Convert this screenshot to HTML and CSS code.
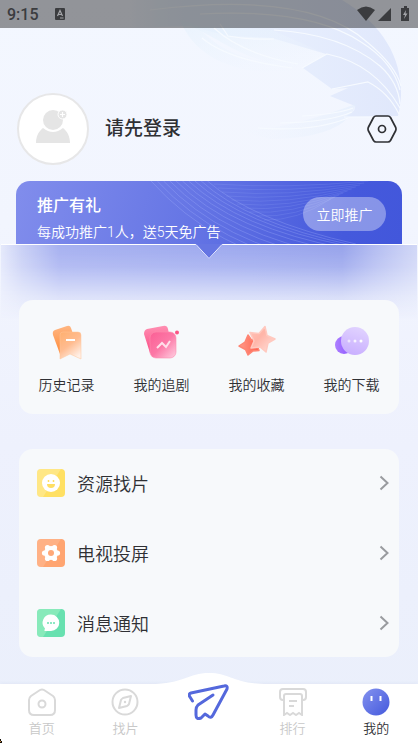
FILE: index.html
```
<!DOCTYPE html>
<html lang="zh-CN">
<head>
<meta charset="utf-8">
<meta name="viewport" content="width=device-width, initial-scale=1">
<title>我的</title>
<link rel="stylesheet" href="styles.css">
</head>
<body>
<div class="app">
  <svg class="swirl" viewBox="0 0 288 180" fill="none" aria-hidden="true">
    <defs>
      <linearGradient id="sw" x1="0" y1="0" x2="1" y2="0">
        <stop offset="0" stop-color="#e2edfc" stop-opacity="0"/><stop offset=".2" stop-color="#e6f0fd"/><stop offset=".6" stop-color="#e4ecfd"/><stop offset="1" stop-color="#dde5fb"/>
      </linearGradient>
      <linearGradient id="sw2" x1="0" y1="0" x2="1" y2="0">
        <stop offset="0" stop-color="#eef5fe" stop-opacity="0"/><stop offset="1" stop-color="#e2edfc"/>
      </linearGradient>
      <linearGradient id="sw3" x1="0" y1="0" x2="1" y2="1">
        <stop offset="0" stop-color="#e6f2fd"/><stop offset="1" stop-color="#eff5fe" stop-opacity="0"/>
      </linearGradient>
    </defs>
    <path d="M0 0H212C255 26 272 60 271 96Q270 108 268 116L214 117Q226 112 225 106L200 96 218 88 202 89 173 68 196 54 142 38 98 36 60 26 0 28Z" fill="url(#sw)" opacity=".85"/>
    <path d="M60 26C86 36 110 60 164 68L196 54 142 30Z" fill="url(#sw3)" opacity=".8"/>
    <path d="M50 20C66 60 110 76 164 72L140 62Q90 56 66 24Z" fill="url(#sw3)" opacity=".7"/>
    <path d="M106 130Q150 132 226 104Q216 138 140 139Z" fill="url(#sw2)" opacity=".6"/>
    <g stroke="#f6faff" stroke-width="1.2">
      <path d="M20 10Q180 -10 237 42 266 66 271 86"/>
      <path d="M70 14Q180 8 231 42 263 62 270 90"/>
      <path d="M144 30Q212 34 250 66 268 82 270 104"/>
      <path d="M172 68 197 54Q245 64 270 108"/>
      <path d="M202 89 238 82Q258 92 269 114"/>
      <path d="M90 24 98 36Q120 40 144 39"/>
      <path d="M72 38Q98 60 162 68"/>
      <path d="M84 28Q112 54 168 64"/>
      <path d="M214 117H248"/>
      <path d="M172 116Q208 114 223 108"/>
      <path d="M150 123Q200 122 222 112"/>
      <path d="M128 128Q184 132 218 118"/>
    </g>
  </svg>

  <header class="status">
    <span class="clock">9:15</span>
    <svg class="status-app" viewBox="0 0 12 12" aria-hidden="true"><rect x="1" y="0" width="10" height="12" rx="1" fill="#3b3c3f"/><path d="M3.5 8 6 2.5 8.500 8M4.500 6.500H7.500" stroke="#a5a6aa" stroke-width="1.2" fill="none"/><path d="M6 10H9.500" stroke="#a5a6aa"/></svg>
    <svg class="status-icons" viewBox="0 0 54 16" fill="#3b3c3f" aria-hidden="true">
      <path d="M0 4Q9-3 18 4L9 15Z"/><path d="M34 2V15H21Z"/>
      <path d="M45 2H47V0H50V2H52V15H44V2Z"/><path d="M49 4 46 9H48L47 13 50.500 7.500H48.500Z" fill="#a5a6aa"/>
    </svg>
  </header>

  <main>
    <section class="profile">
      <svg class="avatar" viewBox="0 0 72 72" aria-hidden="true">
        <circle cx="36" cy="36" r="35" fill="#fff" stroke="#e7e7e8" stroke-width="2"/>
        <circle cx="36" cy="27" r="10" fill="#e5e5e5"/>
        <path d="M19 50C19 43 22 38 26 35Q36 43 46 35C50 38 53 43 53 50Z" fill="#e5e5e5"/>
        <circle cx="45.500" cy="21.500" r="4.500" fill="#e5e5e5" stroke="#fff"/><path d="M43 21.500H48M45.500 19V24" stroke="#fff" stroke-width="1.2"/>
      </svg>
      <a class="login" href="#login">请先登录</a>
      <button class="settings" type="button" aria-label="设置">
        <svg viewBox="0 0 30 28" fill="none" stroke="#2f3034" stroke-width="1.700" aria-hidden="true"><path d="M9 1H21Q22.500 1 23.500 2.500L28.500 12Q29.500 14 28.500 16L23.500 25.500Q22.500 27 21 27H9Q7.500 27 6.500 25.500L1.500 16Q.5 14 1.500 12L6.500 2.500Q7.500 1 9 1Z"/><circle cx="15" cy="14" r="3.500"/></svg>
      </button>
    </section>

    <section class="promo">
      <svg class="promo-lines" viewBox="0 0 240 80" preserveAspectRatio="none" fill="none" stroke="#aab8ff" stroke-opacity=".35" stroke-width=".8" aria-hidden="true">
        <path d="M0 0Q60 70 160 90M6 0Q64 66 164 86M12 0Q68 62 168 82M18 0Q72 58 172 78M24 0Q76 54 176 74M30 0Q80 50 180 70M36 0Q84 47 184 67M42 0Q88 44 188 65M48 0Q92 42 192 64M54 0Q98 40 196 63"/>
        <path stroke-opacity=".2" d="M60 3Q130 8 208 0M64 7Q130 12 204 2M68 11Q130 16 200 4M72 15Q130 20 196 6M77 19Q130 24 192 8M82 23Q130 28 188 10M88 27Q130 31 184 12M94 31Q134 34 180 14M101 35Q138 37 176 16M108 39Q140 40 172 18"/>
      </svg>
      <div class="promo-text">
        <h2>推广有礼</h2>
        <p>每成功推广1人，送5天免广告</p>
      </div>
      <button class="promo-button" type="button">立即推广</button>
    </section>

    <div class="sheet">
      <div class="glass">
        <div class="glass-edge"></div>
        <svg class="notch" viewBox="0 0 28 16" aria-hidden="true"><path d="M0 0H28L14 15Z" fill="#6575e3"/><path d="M0 .5H1L14 14.500 27 .5H28" fill="none" stroke="#e8ebff"/></svg>
        <div class="glass-edge"></div>
      </div>

      <nav class="card shortcuts" aria-label="我的内容">
        <a href="#history">
          <svg viewBox="0 0 40 36" aria-hidden="true">
            <defs><linearGradient id="o1" x2="0" y2="1"><stop stop-color="#ffb682"/><stop offset="1" stop-color="#ff8a38"/></linearGradient><linearGradient id="o2" x1=".1" y1="0" x2=".7" y2="1"><stop stop-color="#ffb071"/><stop offset=".5" stop-color="#ffbc90"/><stop offset="1" stop-color="#fff0e7"/></linearGradient></defs>
            <path d="M8 5 20 1Q23 0 24 3L31 24 13 29 6 10Q5 6 8 5Z" fill="url(#o1)"/><path d="M16 7H31Q34 7 34 10V34L23 29 13 34V10Q13 7 16 7Z" fill="url(#o2)" stroke="#ffc69b" stroke-width=".5"/><path d="M19 15H28" stroke="#fff" stroke-width="2"/>
          </svg>
          <span>历史记录</span>
        </a>
        <a href="#following">
          <svg viewBox="0 0 40 36" aria-hidden="true">
            <defs><linearGradient id="p1" x2="0" y2="1"><stop stop-color="#ff8fb2"/><stop offset="1" stop-color="#fb4a84"/></linearGradient><linearGradient id="p2" x2="1" y2="1"><stop stop-color="#fb5f95"/><stop offset=".5" stop-color="#fc78a6"/><stop offset="1" stop-color="#ffd0e2"/></linearGradient></defs>
            <path d="M5 4 21 1Q25 0 26 4L30 23 8 28 2 9Q2 5 5 4Z" fill="url(#p1)"/><rect x="8" y="7" width="26" height="26" rx="6" fill="url(#p2)" stroke="#fd8db0" stroke-width=".6"/><path d="M15 23 20 18 24 22 28 16" fill="none" stroke="#ffe0ea" stroke-width="2"/><circle cx="35" cy="7.500" r="2" fill="#fb5585"/>
          </svg>
          <span>我的追剧</span>
        </a>
        <a href="#favorites">
          <svg viewBox="0 0 40 36" aria-hidden="true">
            <defs><linearGradient id="r1" x2="1"><stop stop-color="#ff9b8a"/><stop offset="1" stop-color="#ff604d"/></linearGradient><linearGradient id="r2" x2="1" y2="1"><stop stop-color="#ffc3b8"/><stop offset=".4" stop-color="#ffb5a8"/><stop offset="1" stop-color="#ffe2dc"/></linearGradient></defs>
            <path d="M11 10 14.500 15 22 13 20 20 22 25.500 16 26 11 30 8.500 24.500 2 21 8 17Z" fill="url(#r1)" stroke="#ff8573" stroke-width="1.5" stroke-linejoin="round"/><path d="M28 1.500 30 10.500 38 14 31 18 29 27 23 22 14 23 17 16 13 7.500 22 8.500Z" fill="url(#r2)" stroke="#ffc9bf" stroke-width="1.500" stroke-linejoin="round"/>
          </svg>
          <span>我的收藏</span>
        </a>
        <a href="#downloads">
          <svg viewBox="0 0 40 36" aria-hidden="true">
            <defs><linearGradient id="v1" x2="1"><stop stop-color="#ad80ff"/><stop offset="1" stop-color="#8950ff"/></linearGradient><linearGradient id="v2" x1=".7" x2=".4" y2="1"><stop stop-color="#e1d3ff"/><stop offset="1" stop-color="#c9afff"/></linearGradient></defs>
            <circle cx="12" cy="20" r="9" fill="url(#v1)"/><circle cx="23" cy="16" r="14" fill="url(#v2)"/><circle cx="17" cy="16" r="1.500" fill="#fff" opacity=".6"/><circle cx="23" cy="16" r="1.500" fill="#fff" opacity=".8"/><circle cx="29" cy="16" r="1.500" fill="#fff"/>
          </svg>
          <span>我的下载</span>
        </a>
      </nav>

      <nav class="card menu" aria-label="服务">
        <a href="#find">
          <svg class="menu-icon" viewBox="0 0 28 28" aria-hidden="true"><rect width="28" height="28" rx="4" fill="#ffe063"/><path d="M4 0H24L6 28H4Q0 28 0 24V4Q0 0 4 0Z" fill="#fff" opacity=".22"/><circle cx="14" cy="14" r="9" fill="#fff"/><path d="M10 15H18Q18 19 14 19T10 15Z" fill="#ffdf63"/><path d="M11.500 11V13M16.500 11V13" stroke="#ffdf63" stroke-width="1.500"/></svg>
          <span>资源找片</span>
          <svg class="chevron" viewBox="0 0 10 16" aria-hidden="true"><path d="M1.500 1.500 8.500 8 1.500 14.500"/></svg>
        </a>
        <a href="#cast">
          <svg class="menu-icon" viewBox="0 0 28 28" aria-hidden="true"><rect width="28" height="28" rx="4" fill="#ffa571"/><path d="M4 0H24L6 28H4Q0 28 0 24V4Q0 0 4 0Z" fill="#fff" opacity=".14"/><g fill="#fff"><circle cx="14" cy="14" r="7"/><circle cx="10.500" cy="8.500" r="2.600"/><circle cx="17.500" cy="8.500" r="2.600"/><circle cx="20.500" cy="14" r="2.600"/><circle cx="17.500" cy="19.500" r="2.600"/><circle cx="10.500" cy="19.500" r="2.600"/><circle cx="7.500" cy="14" r="2.600"/></g><circle cx="14" cy="14" r="3" fill="#ffa979"/></svg>
          <span>电视投屏</span>
          <svg class="chevron" viewBox="0 0 10 16" aria-hidden="true"><path d="M1.500 1.500 8.500 8 1.500 14.500"/></svg>
        </a>
        <a href="#messages">
          <svg class="menu-icon" viewBox="0 0 28 28" aria-hidden="true"><rect width="28" height="28" rx="4" fill="#68e1b0"/><path d="M4 0H24L6 28H4Q0 28 0 24V4Q0 0 4 0Z" fill="#9ff0c2" opacity=".6"/><path d="M14 5.500A8.200 8.200 0 1 1 14 22H8Q7 22 7.500 21L8 19.500A8.200 8.200 0 0 1 14 5.500Z" fill="#fff"/><g fill="#68e1b0"><circle cx="11" cy="14" r="1"/><circle cx="14" cy="14" r="1"/><circle cx="17" cy="14" r="1"/></g></svg>
          <span>消息通知</span>
          <svg class="chevron" viewBox="0 0 10 16" aria-hidden="true"><path d="M1.500 1.500 8.500 8 1.500 14.500"/></svg>
        </a>
      </nav>
    </div>
  </main>

  <nav class="tabs" aria-label="主导航">
    <svg class="hump" viewBox="0 0 118 12" aria-hidden="true"><path d="M0 12C34 12 38 1 59 1S84 12 118 12Z" fill="#fff"/></svg>
    <a href="#home">
      <svg viewBox="0 0 28 28" fill="none" stroke="#d9d9d9" stroke-width="2" aria-hidden="true"><path d="M12 2Q14 .8 16 2L25 8Q27 9.500 27 12V22Q27 27 22 27H6Q1 27 1 22V12Q1 9.500 3 8Z"/><circle cx="14" cy="16" r="3.500"/></svg>
      <span>首页</span>
    </a>
    <a href="#discover">
      <svg viewBox="0 0 28 28" fill="none" stroke="#d9d9d9" stroke-width="2" stroke-linejoin="round" aria-hidden="true"><circle cx="14" cy="14" r="12.500"/><path d="M20 8 18 16Q17.500 17 16 18L8 20 10 12Q10.500 11 12 10Z"/><circle cx="14" cy="14" r="1.200" fill="#d9d9d9" stroke="none"/></svg>
      <span>找片</span>
    </a>
    <a class="send" href="#share" aria-label="推广">
      <svg viewBox="0 0 42 38" fill="none" stroke="#5468dc" stroke-width="3" stroke-linecap="round" stroke-linejoin="round" aria-hidden="true"><path d="M4.500 17 2 13Q0 10 3 9L36 2Q40 1 39 5L25 31Q23 35 20 32L17 30 13 34Q8 36 8 31V26Q8 23 10 21L25 11"/></svg>
    </a>
    <a href="#rank">
      <svg viewBox="0 0 28 28" fill="none" stroke="#d9d9d9" stroke-width="2" aria-hidden="true"><path d="M5 12H4Q1 12 1 9V4Q1 1 4 1H24Q27 1 27 4V9Q27 12 24 12H23"/><path d="M5 27V8Q5 6 7 6H21Q23 6 23 8V27L20 25 17 27 14 25 11 27 8 25Z"/><path d="M10 13H18M10 18H15"/></svg>
      <span>排行</span>
    </a>
    <a class="active" href="#me" aria-current="page">
      <svg viewBox="0 0 28 28" aria-hidden="true"><defs><linearGradient id="me" x2="1" y2="1"><stop stop-color="#8492ef"/><stop offset="1" stop-color="#4459dc"/></linearGradient></defs><circle cx="14" cy="14" r="13.500" fill="url(#me)"/><path d="M9.500 8V13M18.500 8V13" stroke="#fff" stroke-width="2"/></svg>
      <span>我的</span>
    </a>
    <svg class="corner" viewBox="0 0 3 4" aria-hidden="true"><path d="M0 0H1V2H2V4H0Z" fill="#17120c"/><path d="M0 2H1V3H0Z" fill="#c98a3c"/></svg>
  </nav>
</div>
</body>
</html>
```

FILE: styles.css
```
* { box-sizing: border-box; }

body {
  margin: 0;
  font-family: Roboto, "Noto Sans CJK SC", sans-serif;
  font-weight: 350;
  color: #2f3034;
}

a { color: inherit; text-decoration: none; }
button { font: inherit; border: 0; padding: 0; background: none; color: inherit; }
svg { display: block; flex: none; }

.app {
  position: relative;
  display: flex;
  flex-direction: column;
  min-height: 100vh;
  overflow: hidden;
  background: linear-gradient(#f3f7ff, #f2f5fe 30%, #eef1fd 60%, #eaeffb);
}

main { position: relative; flex: 1; }

.swirl { position: absolute; top: 0; right: 0; width: 288px; height: 180px; }

.status {
  position: relative;
  display: flex;
  align-items: center;
  height: 28px;
  padding: 0 7px;
  background: rgba(0, 0, 0, .4);
}
.clock { font-size: 16px; font-weight: 500; color: #3b3c3f; }
.status-app { width: 12px; height: 12px; margin-left: 15px; }
.status-icons { width: 54px; height: 16px; margin-left: auto; }

.profile {
  display: flex;
  align-items: center;
  gap: 16px;
  padding: 65px 21px 16px 17px;
}
.avatar { width: 72px; height: 72px; }
.login { font-size: 19px; line-height: 26px; font-weight: 500; }
.settings { margin-left: auto; }
.settings svg { width: 30px; height: 28px; }

.promo {
  position: relative;
  display: flex;
  align-items: flex-start;
  justify-content: space-between;
  height: 63px;
  margin: 0 16px;
  padding: 13px 16px 0 21px;
  border-radius: 14px 14px 0 0;
  overflow: hidden;
  color: #fff;
  background: linear-gradient(105deg, #818dec, #6676e5 45%, #4559dc 85%, #4257db);
}
.promo-lines { position: absolute; top: 0; right: 0; width: 65%; height: 80px; }
.promo-text { position: relative; }
.promo h2 { margin: 0; font-size: 16px; line-height: 24px; font-weight: 500; }
.promo p { margin: 4px 0 0; font-size: 14px; line-height: 20px; white-space: nowrap; }
.promo-button {
  position: relative;
  margin-top: 3px;
  width: 83px;
  height: 34px;
  border-radius: 17px;
  font-size: 14px;
  background: rgba(255, 255, 255, .36);
}

.sheet { padding-bottom: 26px; }
.glass {
  position: relative;
  display: flex;
  height: 56px;
  margin: 0 1px;
}
.glass::before {
  content: "";
  position: absolute;
  inset: 0 0 -20px;
  background: linear-gradient(90deg, #e4e8fb, #c8cff5 5%, #a5aff0 14%, #9aa6ee 60%, #95a1eb 82%, #b2bbf1 90%, #d0d6f6);
  mask-image: linear-gradient(#000, rgba(0, 0, 0, .8) 30%, rgba(0, 0, 0, .25) 70%, transparent);
}
.glass-edge { position: relative; flex: 1; height: 1px; background: #fff; }
.notch { position: relative; width: 28px; height: 16px; }

.card {
  position: relative;
  margin: 0 19px;
  border-radius: 14px;
  background: #f7f9fb;
}
.shortcuts { display: flex; padding: 25px 0 19px; }
.shortcuts a {
  flex: 1;
  display: flex;
  flex-direction: column;
  align-items: center;
  gap: 14px;
  font-size: 14px;
  line-height: 20px;
}
.shortcuts svg { width: 40px; height: 36px; }

.menu {
  display: flex;
  flex-direction: column;
  gap: 42px;
  margin-top: 35px;
  padding: 20px 10px 20px 18px;
}
.menu a {
  display: flex;
  align-items: center;
  gap: 12px;
  height: 28px;
  font-size: 18px;
}
.menu-icon { width: 28px; height: 28px; }
.chevron {
  width: 10px;
  height: 16px;
  margin-left: auto;
  fill: none;
  stroke: #999b9f;
  stroke-width: 2;
}

.tabs {
  position: relative;
  display: flex;
  height: 59px;
  padding-top: 4px;
  background: #fff;
  box-shadow: 0 -1px 3px rgba(80, 100, 160, .06);
}
.tabs a {
  flex: 1;
  display: flex;
  flex-direction: column;
  align-items: center;
  gap: 4px;
  font-size: 13px;
  line-height: 18px;
  color: #c8c8c8;
}
.tabs a svg { width: 28px; height: 28px; }
.tabs .active { color: #2f3034; }
.tabs .send { position: relative; margin-top: -4px; }
.tabs .send svg { width: 42px; height: 38px; }
.tabs .hump {
  position: absolute;
  bottom: 100%;
  left: 50%;
  width: 118px;
  height: 12px;
  margin-left: -59px;
}
.tabs .corner { position: absolute; left: 0; bottom: 0; width: 3px; height: 4px; }
```
